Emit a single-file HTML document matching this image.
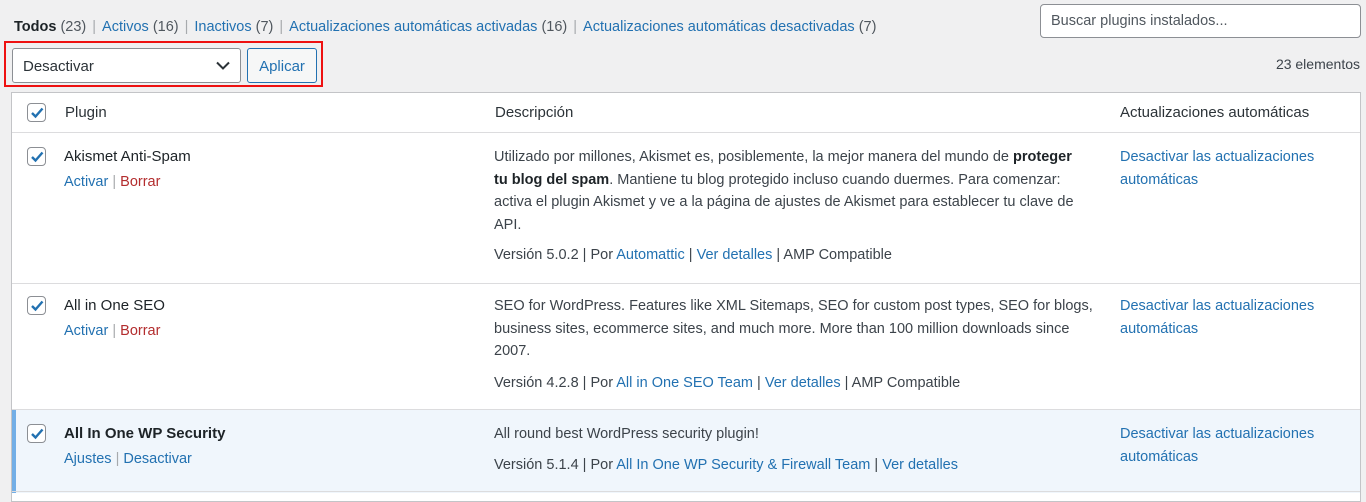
<!DOCTYPE html>
<html><head><meta charset="utf-8"><style>
*{box-sizing:border-box;margin:0;padding:0}
body{width:1366px;height:493px;overflow:hidden;background:#f0f0f1;font-family:"Liberation Sans",sans-serif;font-size:14px;color:#3c434a;position:relative}
a{color:#2271b1;text-decoration:none}
.abs{position:absolute;white-space:nowrap}
.sub{top:19px;left:14px;font-size:14.5px}
.sub .sep{color:#a7aaad;margin:0 6px}
.search{left:1040px;top:4px;width:321px;height:34px;border:1px solid #8c8f94;border-radius:4px;background:#fff;padding:8px 10px;color:#50575e;font-size:14.5px}
.red{left:4px;top:41px;width:319px;height:46px;border:2px solid #e11;}
.sel{left:12px;top:48px;width:229px;height:35px;border:1px solid #8c8f94;border-radius:3px;background:#fff;padding:9px 10px;font-size:15px;color:#2c3338}
.btn{left:247px;top:48px;width:70px;height:35px;border:1px solid #2271b1;border-radius:3px;background:#f6f7f7;color:#2271b1;padding:9px 0;text-align:center;font-size:15px}
.count{right:6px;top:56px;font-size:14px}
.tbl{left:11px;top:92px;width:1350px;height:410px;background:#fff;border:1px solid #c3c4c7}
.cb{position:absolute;left:27px;width:19px;height:19px;border:1px solid #8c8f94;border-radius:4px;background:#fff}
.cb svg{position:absolute;left:1px;top:1px}
.line{position:absolute;left:12px;width:1348px;height:1px;background:#dcdcde}
.t{position:absolute;font-size:15px;line-height:22.5px;color:#1d2327}
.d{position:absolute;left:494px;width:594px;font-size:14.5px;line-height:22.5px;color:#3c434a}
.au{position:absolute;left:1120px;width:210px;font-size:14.5px;line-height:22.5px}
.act{position:absolute;left:64px;font-size:14.5px;color:#a7aaad}
.del{color:#b32d2e}
</style></head><body>
<div class="abs sub"><b style="color:#1d2327">Todos</b> <span style="color:#50575e">(23)</span><span class="sep">|</span><a>Activos</a> <span style="color:#50575e">(16)</span><span class="sep">|</span><a>Inactivos</a> <span style="color:#50575e">(7)</span><span class="sep">|</span><a>Actualizaciones automáticas activadas</a> <span style="color:#50575e">(16)</span><span class="sep">|</span><a>Actualizaciones automáticas desactivadas</a> <span style="color:#50575e">(7)</span></div>
<div class="abs search">Buscar plugins instalados...</div>
<div class="abs red"></div>
<div class="abs sel">Desactivar<svg style="position:absolute;right:10px;top:12px" width="14" height="9" viewBox="0 0 14 9"><path d="M1 1.5l6 6 6-6" stroke="#2c3338" stroke-width="2" fill="none"/></svg></div>
<div class="abs btn">Aplicar</div>
<div class="abs count">23 elementos</div>
<div class="abs tbl"></div>
<div class="abs" style="left:12px;top:409px;width:1348px;height:84px;background:#f0f6fc;border-left:4px solid #72aee6"></div>
<div class="line" style="top:132px"></div>
<div class="line" style="top:283px"></div>
<div class="line" style="top:409px"></div>
<div class="line" style="top:491px"></div>
<div class="cb" style="top:103px"><svg width="16" height="16" viewBox="0 0 16 16"><path d="M3 8l3.5 3.5L13.5 3.5" stroke="#2271b1" stroke-width="2.4" fill="none"/></svg></div>
<div class="t" style="left:65px;top:102px;color:#2c3338">Plugin</div>
<div class="t" style="left:495px;top:102px;color:#2c3338">Descripción</div>
<div class="t" style="left:1120px;top:102px;color:#2c3338">Actualizaciones automáticas</div>
<div class="cb" style="top:147px"><svg width="16" height="16" viewBox="0 0 16 16"><path d="M3 8l3.5 3.5L13.5 3.5" stroke="#2271b1" stroke-width="2.4" fill="none"/></svg></div>
<div class="t" style="left:64px;top:146px">Akismet Anti-Spam</div>
<div class="act" style="top:174px"><a>Activar</a> | <a class="del">Borrar</a></div>
<div class="d" style="top:146px">Utilizado por millones, Akismet es, posiblemente, la mejor manera del mundo de <b style="color:#1d2327">proteger tu blog del spam</b>. Mantiene tu blog protegido incluso cuando duermes. Para comenzar: activa el plugin Akismet y ve a la página de ajustes de Akismet para establecer tu clave de API.</div>
<div class="d" style="top:244px">Versión 5.0.2 | Por <a>Automattic</a> | <a>Ver detalles</a> | AMP Compatible</div>
<div class="au" style="top:146px"><a>Desactivar las actualizaciones automáticas</a></div>
<div class="cb" style="top:296px"><svg width="16" height="16" viewBox="0 0 16 16"><path d="M3 8l3.5 3.5L13.5 3.5" stroke="#2271b1" stroke-width="2.4" fill="none"/></svg></div>
<div class="t" style="left:64px;top:295px">All in One SEO</div>
<div class="act" style="top:323px"><a>Activar</a> | <a class="del">Borrar</a></div>
<div class="d" style="top:295px;width:605px">SEO for WordPress. Features like XML Sitemaps, SEO for custom post types, SEO for blogs, business sites, ecommerce sites, and much more. More than 100 million downloads since 2007.</div>
<div class="d" style="top:372px">Versión 4.2.8 | Por <a>All in One SEO Team</a> | <a>Ver detalles</a> | AMP Compatible</div>
<div class="au" style="top:295px"><a>Desactivar las actualizaciones automáticas</a></div>
<div class="cb" style="top:424px"><svg width="16" height="16" viewBox="0 0 16 16"><path d="M3 8l3.5 3.5L13.5 3.5" stroke="#2271b1" stroke-width="2.4" fill="none"/></svg></div>
<div class="t" style="left:64px;top:423px;font-weight:bold">All In One WP Security</div>
<div class="act" style="top:451px"><a>Ajustes</a> | <a>Desactivar</a></div>
<div class="d" style="top:423px">All round best WordPress security plugin!</div>
<div class="d" style="top:454px">Versión 5.1.4 | Por <a>All In One WP Security &amp; Firewall Team</a> | <a>Ver detalles</a></div>
<div class="au" style="top:423px"><a>Desactivar las actualizaciones automáticas</a></div>
</body></html>
